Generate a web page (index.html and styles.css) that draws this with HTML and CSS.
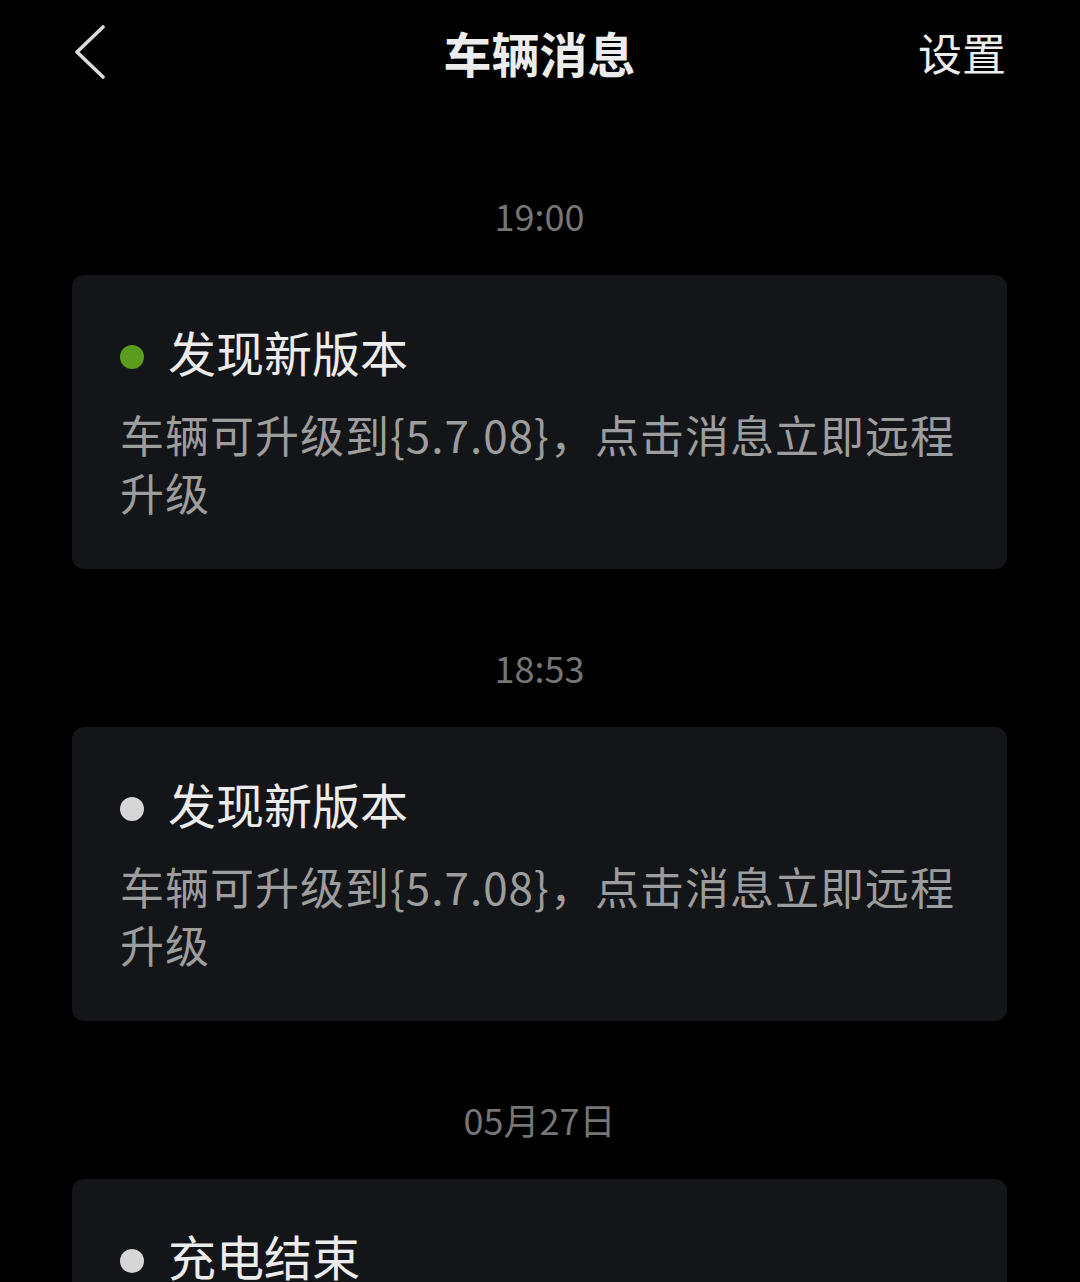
FILE: index.html
```html
<!DOCTYPE html>
<html lang="zh-CN">
<head>
  <meta charset="UTF-8" />
  <meta name="viewport" content="width=device-width, initial-scale=1.0" />
  <title>车辆消息</title>
  <link rel="stylesheet" href="styles.css">
</head>
<body>

  <header class="topbar">
    <a class="back" href="#" aria-label="返回">
      <svg width="34" height="54" viewBox="0 0 34 54">
        <polyline points="30,2 4,27 30,52" fill="none" stroke="#dcdcdc" stroke-width="3.6" stroke-linecap="round" stroke-linejoin="round" />
      </svg>
    </a>
    <h1 class="title">车辆消息</h1>
    <a class="settings" href="#">设置</a>
  </header>

  <main class="list">
    <section class="group">
      <div class="time">19:00</div>
      <div class="card">
        <div class="card-head">
          <span class="dot dot-new"></span>
          <span class="card-title">发现新版本</span>
        </div>
        <p class="card-body">车辆可升级到{5.7.08}，点击消息立即远程升级</p>
      </div>
    </section>

    <section class="group">
      <div class="time">18:53</div>
      <div class="card">
        <div class="card-head">
          <span class="dot"></span>
          <span class="card-title">发现新版本</span>
        </div>
        <p class="card-body">车辆可升级到{5.7.08}，点击消息立即远程升级</p>
      </div>
    </section>

    <section class="group">
      <div class="time">05月27日</div>
      <div class="card card-last">
        <div class="card-head">
          <span class="dot"></span>
          <span class="card-title">充电结束</span>
        </div>
      </div>
    </section>
  </main>

</body>
</html>
```

FILE: styles.css
```css
body {
  margin: 0;
  background-color: #000;
  font-family: "Noto Sans CJK SC", "Noto Sans", sans-serif;
  color: #ececec;
  height: 1282px;
  overflow: hidden;
}

.topbar {
  height: 104px;
  padding: 0 74px 0 73px;
  display: grid;
  grid-template-columns: 1fr auto 1fr;
  align-items: center;
}

.back {
  display: flex;
  align-items: center;
}

.title {
  margin: 0;
  font-size: 48px;
  font-weight: 700;
  color: #ececec;
  line-height: 1;
}

.settings {
  justify-self: end;
  font-size: 44px;
  color: #ececec;
  text-decoration: none;
  line-height: 1;
}

.list {
  padding: 13px 73px 0 72px;
}

.group {
  padding-top: 76px;
}

.time {
  text-align: center;
  font-size: 36px;
  line-height: 44px;
  color: #767676;
  margin-bottom: 38px;
}

.card {
  background-color: #141519;
  border-radius: 12px;
  padding: 46px 48px 48px 48px;
}

.card-last {
  padding-bottom: 40px;
}

.card-head {
  display: flex;
  align-items: center;
  gap: 24px;
  height: 60px;
}

.dot {
  width: 24px;
  height: 24px;
  border-radius: 50%;
  background-color: #d6d6d6;
  margin-top: 12px;
  flex-shrink: 0;
}

.dot-new {
  background-color: #5c9c1c;
}

.card-title {
  font-size: 48px;
  line-height: 60px;
  color: #ececec;
}

.card-body {
  margin: 24px 0 0 0;
  font-size: 44px;
  line-height: 58px;
  letter-spacing: 1px;
  color: #9d9d9d;
}
```
